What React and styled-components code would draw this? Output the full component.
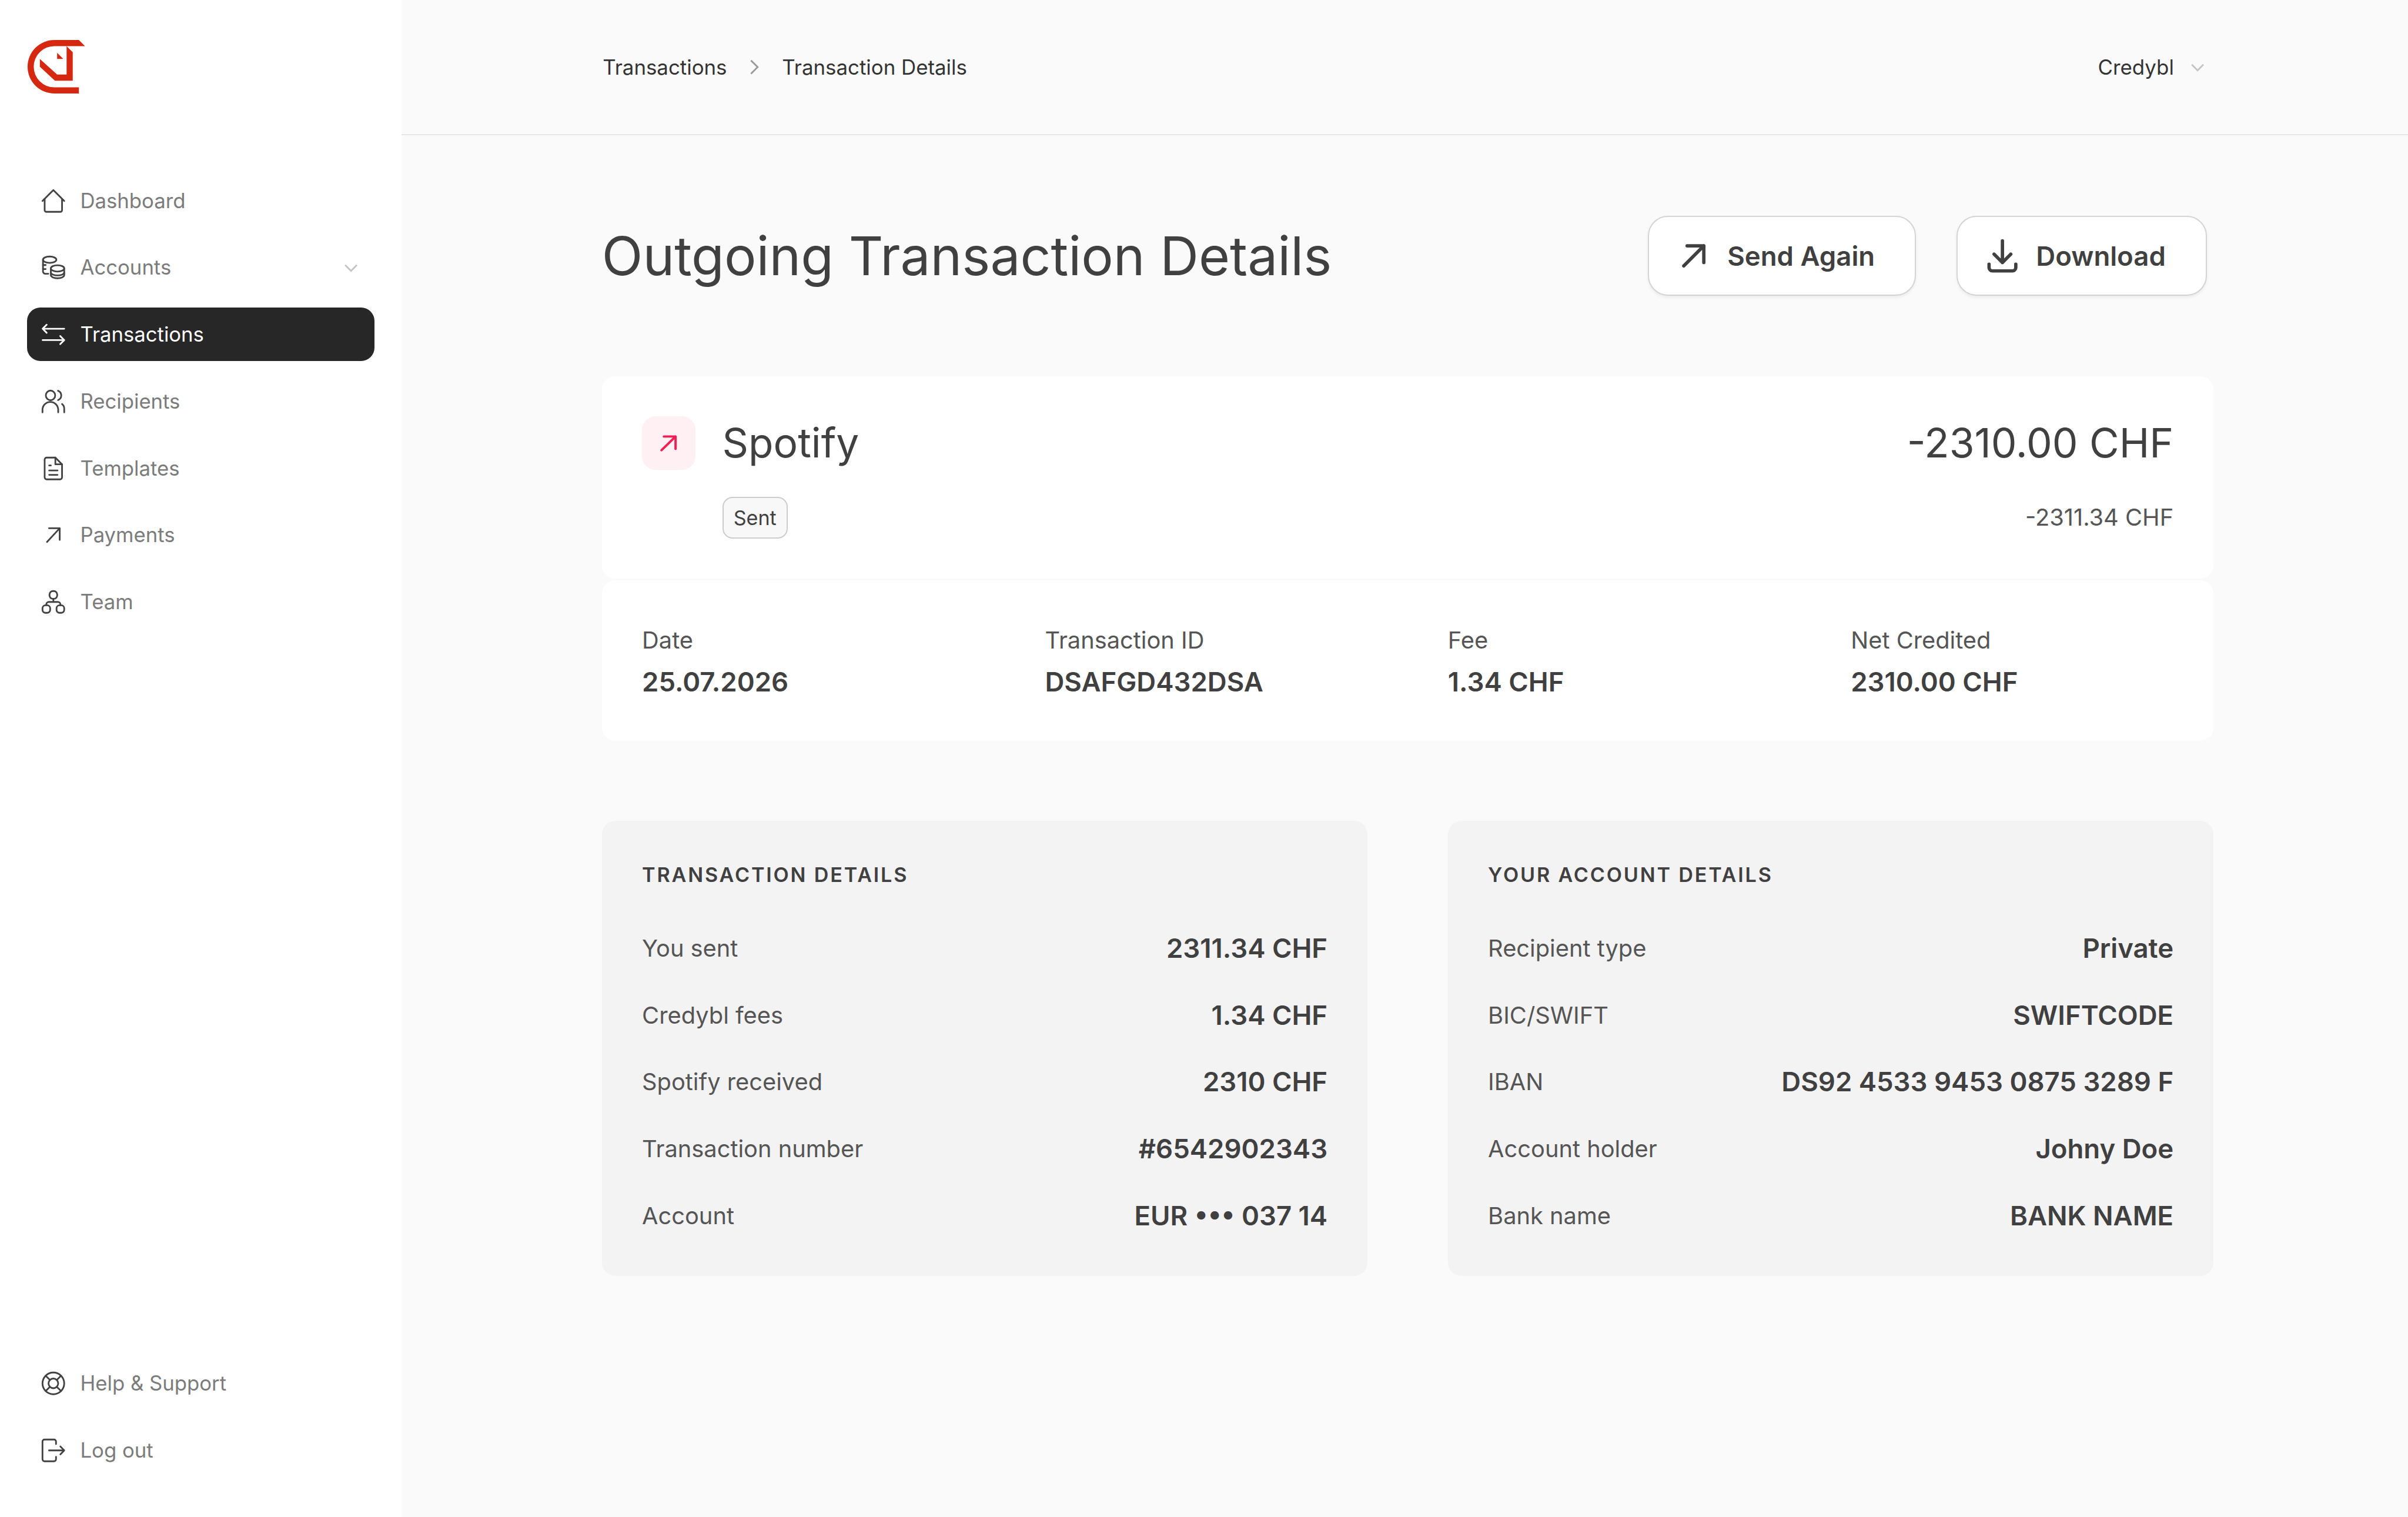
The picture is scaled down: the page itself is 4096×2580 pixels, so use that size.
import React from "react";
import styled, { createGlobalStyle } from "styled-components";

const GlobalStyle = createGlobalStyle`
  html, body {
    margin: 0;
    padding: 0;
    background: #fafafa;
  }
  #root {
    zoom: 2.844;
    font-family: Inter, "Liberation Sans", sans-serif;
  }
  * {
    box-sizing: border-box;
  }
`;

const Shell = styled.div`
  display: flex;
  height: 907.2px;
  overflow: hidden;
`;

const Sidebar = styled.aside`
  width: 240px;
  flex: none;
  background: #ffffff;
  display: flex;
  flex-direction: column;
  padding: 24px 16px;
`;

const LogoMark = styled.svg`
  width: 35px;
  height: 32px;
  display: block;
`;

const NavList = styled.nav`
  display: flex;
  flex-direction: column;
  gap: 8px;
  margin-top: 48px;
`;

const FootList = styled(NavList)`
  margin-top: auto;
`;

const NavItem = styled.div`
  height: 32px;
  display: flex;
  align-items: center;
  gap: 8px;
  padding: 0 8px;
  border-radius: 8px;
  font-size: 12.2px;
  line-height: 16px;
  color: ${(p) => (p.$active ? "#ffffff" : "#7b7b7b")};
  background: ${(p) => (p.$active ? "#272727" : "transparent")};
`;

const NavIcon = styled.svg`
  width: 16px;
  height: 16px;
  flex: none;
  fill: none;
  stroke: ${(p) => (p.$active ? "#ffffff" : "#424242")};
  stroke-width: 1;
  stroke-linecap: round;
  stroke-linejoin: round;
`;

const NavChevron = styled.svg`
  width: 12px;
  height: 12px;
  margin-left: auto;
  fill: none;
  stroke: #c4c4c4;
  stroke-width: 1;
`;

const Main = styled.main`
  flex: 1;
  min-width: 0;
  background: #fafafa;
`;

const TopBar = styled.header`
  height: 81px;
  border-bottom: 1px solid #e6e6e6;
  padding: 0 120px;
  display: flex;
  align-items: center;
  justify-content: space-between;
  font-size: 12.25px;
  color: #333333;
`;

const Crumbs = styled.div`
  display: flex;
  align-items: center;
  gap: 10.5px;
  padding-left: 0.5px;
`;

const SmallChevron = styled.svg`
  width: 12px;
  height: 12px;
  fill: none;
  stroke: ${(p) => p.$tone};
  stroke-width: 1;
`;

const Account = styled.div`
  display: flex;
  align-items: center;
  gap: 8px;
`;

const Content = styled.div`
  width: 964px;
  margin-left: 120px;
  padding-top: 48px;
`;

const HeadRow = styled.div`
  width: 960px;
  display: flex;
  align-items: center;
  justify-content: space-between;
`;

const Title = styled.h1`
  margin: 0;
  font-size: 32px;
  line-height: 48px;
  font-weight: 400;
  color: #404040;
`;

const Actions = styled.div`
  display: flex;
  gap: 24px;
`;

const ActionButton = styled.button`
  height: 48px;
  display: flex;
  align-items: center;
  gap: 8px;
  padding: 0 24px 0 15px;
  background: #ffffff;
  border: 1px solid #d4d4d4;
  border-radius: 12px;
  box-shadow: 0 1px 2px rgba(0, 0, 0, 0.06);
  font-family: inherit;
  font-size: 16px;
  font-weight: 600;
  color: #404040;
`;

const ButtonIcon = styled.svg`
  width: 24px;
  height: 24px;
  fill: none;
  stroke: #404040;
  stroke-width: 2;
  stroke-linecap: round;
  stroke-linejoin: round;
`;

const SummaryCard = styled.section`
  margin-top: 48px;
  padding: 24px;
  background: #ffffff;
  border-radius: 8px;
`;

const SummaryTop = styled.div`
  display: flex;
  align-items: center;
  justify-content: space-between;
`;

const SummaryName = styled.div`
  display: flex;
  align-items: center;
  gap: 16px;
  font-size: 24.4px;
  line-height: 32px;
  color: #404040;
`;

const DirectionBadge = styled.div`
  width: 32px;
  height: 32px;
  border-radius: 8px;
  background: #fff0f3;
  display: flex;
  align-items: center;
  justify-content: center;
`;

const DirectionArrow = styled.svg`
  width: 16px;
  height: 16px;
  fill: none;
  stroke: #f01f55;
  stroke-width: 1.4;
  stroke-linecap: round;
  stroke-linejoin: round;
`;

const Amount = styled.div`
  font-size: 24.4px;
  line-height: 32px;
  color: #404040;
`;

const SummaryBottom = styled.div`
  display: flex;
  align-items: center;
  justify-content: space-between;
  margin-top: 16px;
  padding-left: 48px;
`;

const StatusTag = styled.span`
  height: 25px;
  padding: 0 6px;
  display: inline-flex;
  align-items: center;
  background: #f8f8f8;
  border: 1px solid #cccccc;
  border-radius: 6px;
  font-size: 12px;
  color: #404040;
`;

const SubAmount = styled.div`
  font-size: 14px;
  line-height: 24px;
  color: #555555;
`;

const FactsCard = styled.section`
  margin-top: 1px;
  padding: 24px 24px 23px;
  background: #ffffff;
  border-radius: 8px;
  display: grid;
  grid-template-columns: repeat(4, 193px);
  gap: 48px;
`;

const Fact = styled.div`
  display: flex;
  flex-direction: column;
`;

const FactLabel = styled.span`
  font-size: 14px;
  line-height: 24px;
  color: #555555;
`;

const FactValue = styled.span`
  margin-top: 1px;
  font-size: 16px;
  line-height: 24px;
  font-weight: 600;
  color: #404040;
`;

const Panels = styled.div`
  margin-top: 48px;
  display: grid;
  grid-template-columns: 458px 458px;
  gap: 48px;
`;

const Panel = styled.section`
  padding: 24px;
  background: #f3f3f3;
  border-radius: 8px;
`;

const PanelTitle = styled.h2`
  margin: 0 0 24px;
  font-size: 12px;
  line-height: 16px;
  font-weight: 600;
  letter-spacing: 1px;
  color: #404040;
`;

const PanelRows = styled.div`
  display: flex;
  flex-direction: column;
  gap: 16px;
`;

const PanelRow = styled.div`
  height: 24px;
  display: flex;
  align-items: center;
  justify-content: space-between;
`;

const RowLabel = styled.span`
  font-size: 14px;
  color: #555555;
`;

const RowValue = styled.span`
  font-size: 16px;
  font-weight: 600;
  color: #404040;
`;

const icons = {
  home: (
    <>
      <path d="M1.5 8L8 1.5L14.5 8" />
      <path d="M2.8 6.8V13.5a1 1 0 0 0 1 1h8.4a1 1 0 0 0 1-1V6.8" />
    </>
  ),
  coins: (
    <>
      <ellipse cx="5.8" cy="3.4" rx="4" ry="1.9" />
      <path d="M1.8 3.4V10.5a1.4 1.4 0 0 0 1.6 1.3H5" />
      <path d="M1.8 6.6h1.6M1.8 9h1.6" />
      <ellipse cx="10.5" cy="8.6" rx="4" ry="1.9" />
      <path d="M6.5 8.6V12.6c0 1.1 1.8 1.9 4 1.9s4-.8 4-1.9V8.6" />
      <path d="M6.5 11c0 1.1 1.8 1.8 4 1.8s4-.7 4-1.8" />
    </>
  ),
  transfer: (
    <>
      <path d="M14.5 4.6H1.6M4 2.2L1.6 4.6L4 7" />
      <path d="M1.6 11.4H14.5M12.1 9L14.5 11.4L12.1 13.8" />
    </>
  ),
  people: (
    <>
      <ellipse cx="6.3" cy="4.4" rx="2.8" ry="2.9" />
      <path d="M10.8 1.6a3 3 0 0 1 0 5.6" />
      <path d="M1.5 14.5V13a4.7 4.7 0 0 1 9.4 0v1.5" />
      <path d="M13.2 9.5a3.4 3.4 0 0 1 1.3 2.8v2.2" />
    </>
  ),
  file: (
    <>
      <path d="M4 1.5H9.2L13.2 5.5V13.3a1.2 1.2 0 0 1-1.2 1.2H4a1.2 1.2 0 0 1-1.2-1.2V2.7A1.2 1.2 0 0 1 4 1.5Z" />
      <path d="M9.2 1.5V5.5H13.2" />
      <path d="M5.5 6.2H6.5M5.5 9.2H10.5M5.5 11.8H10.5" />
    </>
  ),
  arrow: <path d="M4.2 12.2L11.8 4M5.4 4H11.8V11" />,
  team: (
    <>
      <rect x="5.7" y="1.5" width="4.6" height="4.6" rx="2" />
      <rect x="1.5" y="10" width="4.6" height="4.5" rx="1.8" />
      <rect x="9.9" y="10" width="4.6" height="4.5" rx="1.8" />
      <path d="M8 6.1V8M3.8 10V9.4A1.4 1.4 0 0 1 5.2 8H10.8A1.4 1.4 0 0 1 12.2 9.4V10" />
    </>
  ),
  help: (
    <>
      <circle cx="8" cy="8" r="6.5" />
      <circle cx="8" cy="8" r="2.9" />
      <path d="M3.4 3.4L5.9 5.9M12.6 3.4L10.1 5.9M3.4 12.6L5.9 10.1M12.6 12.6L10.1 10.1" />
    </>
  ),
  logout: (
    <>
      <path d="M9.6 4.2V2.7A1.2 1.2 0 0 0 8.4 1.5H2.7A1.2 1.2 0 0 0 1.5 2.7V13.3A1.2 1.2 0 0 0 2.7 14.5H8.4A1.2 1.2 0 0 0 9.6 13.3V11.8" />
      <path d="M5.4 8H14.5M12.2 5.6L14.5 8L12.2 10.4" />
    </>
  ),
};

const mainNav = [
  { label: "Dashboard", icon: "home" },
  { label: "Accounts", icon: "coins", more: true },
  { label: "Transactions", icon: "transfer", active: true },
  { label: "Recipients", icon: "people" },
  { label: "Templates", icon: "file" },
  { label: "Payments", icon: "arrow" },
  { label: "Team", icon: "team" },
];

const footNav = [
  { label: "Help & Support", icon: "help" },
  { label: "Log out", icon: "logout" },
];

const facts = [
  ["Date", "25.07.2026"],
  ["Transaction ID", "DSAFGD432DSA"],
  ["Fee", "1.34 CHF"],
  ["Net Credited", "2310.00 CHF"],
];

const panels = [
  {
    title: "TRANSACTION DETAILS",
    rows: [
      ["You sent", "2311.34 CHF"],
      ["Credybl fees", "1.34 CHF"],
      ["Spotify received", "2310 CHF"],
      ["Transaction number", "#6542902343"],
      ["Account", "EUR ••• 037 14"],
    ],
  },
  {
    title: "YOUR ACCOUNT DETAILS",
    rows: [
      ["Recipient type", "Private"],
      ["BIC/SWIFT", "SWIFTCODE"],
      ["IBAN", "DS92 4533 9453 0875 3289 F"],
      ["Account holder", "Johny Doe"],
      ["Bank name", "BANK NAME"],
    ],
  },
];

function SideLink({ item }) {
  return (
    <NavItem $active={item.active}>
      <NavIcon viewBox="0 0 16 16" $active={item.active}>
        {icons[item.icon]}
      </NavIcon>
      {item.label}
      {item.more && (
        <NavChevron viewBox="0 0 12 12">
          <path d="M2.5 4.5L6 8L9.5 4.5" />
        </NavChevron>
      )}
    </NavItem>
  );
}

function App() {
  return (
    <Shell>
      <GlobalStyle />
      <Sidebar>
        <LogoMark viewBox="48 72 103 96">
          <path
            fill="#d62811"
            d="M96 72H140L151 83H96A37 37 0 0 0 96 157H140V168H96A48 48 0 0 1 96 72Z"
          />
          <path
            fill="#d62811"
            d="M70 106L101 134H118V83L129 94V145H97L70 120Z"
          />
          <path fill="#d62811" d="M101 95L112 106H101Z" />
        </LogoMark>
        <NavList>
          {mainNav.map((item) => (
            <SideLink key={item.label} item={item} />
          ))}
        </NavList>
        <FootList>
          {footNav.map((item) => (
            <SideLink key={item.label} item={item} />
          ))}
        </FootList>
      </Sidebar>
      <Main>
        <TopBar>
          <Crumbs>
            <span>Transactions</span>
            <SmallChevron viewBox="0 0 12 12" $tone="#999999">
              <path d="M4 2L8 6L4 10" />
            </SmallChevron>
            <span>Transaction Details</span>
          </Crumbs>
          <Account>
            <span>Credybl</span>
            <SmallChevron viewBox="0 0 12 12" $tone="#c4c4c4">
              <path d="M2.5 4.5L6 8L9.5 4.5" />
            </SmallChevron>
          </Account>
        </TopBar>
        <Content>
          <HeadRow>
            <Title>Outgoing Transaction Details</Title>
            <Actions>
              <ActionButton>
                <ButtonIcon viewBox="0 0 24 24">
                  <path d="M6 18L18 6M8 6H18V16" />
                </ButtonIcon>
                Send Again
              </ActionButton>
              <ActionButton>
                <ButtonIcon viewBox="0 0 24 24">
                  <path d="M12 3V16M7 11L12 16L17 11" />
                  <path d="M4 17V19A2 2 0 0 0 6 21H18A2 2 0 0 0 20 19V17" />
                </ButtonIcon>
                Download
              </ActionButton>
            </Actions>
          </HeadRow>

          <SummaryCard>
            <SummaryTop>
              <SummaryName>
                <DirectionBadge>
                  <DirectionArrow viewBox="0 0 16 16">
                    <path d="M3.6 12.2L12 4M5 4H12V11.4" />
                  </DirectionArrow>
                </DirectionBadge>
                Spotify
              </SummaryName>
              <Amount>-2310.00 CHF</Amount>
            </SummaryTop>
            <SummaryBottom>
              <StatusTag>Sent</StatusTag>
              <SubAmount>-2311.34 CHF</SubAmount>
            </SummaryBottom>
          </SummaryCard>

          <FactsCard>
            {facts.map(([label, value]) => (
              <Fact key={label}>
                <FactLabel>{label}</FactLabel>
                <FactValue>{value}</FactValue>
              </Fact>
            ))}
          </FactsCard>

          <Panels>
            {panels.map((panel) => (
              <Panel key={panel.title}>
                <PanelTitle>{panel.title}</PanelTitle>
                <PanelRows>
                  {panel.rows.map(([label, value]) => (
                    <PanelRow key={label}>
                      <RowLabel>{label}</RowLabel>
                      <RowValue>{value}</RowValue>
                    </PanelRow>
                  ))}
                </PanelRows>
              </Panel>
            ))}
          </Panels>
        </Content>
      </Main>
    </Shell>
  );
}

export default App;
